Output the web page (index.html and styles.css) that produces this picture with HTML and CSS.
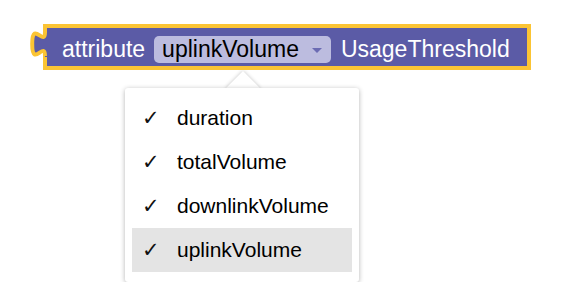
FILE: index.html
```html
<!DOCTYPE html>
<html lang="en">
<head>
    <meta charset="UTF-8">
    <title>Attribute block</title>
    <link rel="stylesheet" href="styles.css">
</head>
<body>

<div class="canvas">
    <div class="block">
        <svg class="tab" width="26" height="46" viewBox="0 0 26 46">
            <path d="M26,9 L20,9 c0,16 -12.8,-12.8 -12.8,12 s12.8,-4 12.8,12 L26,33 Z" fill="#5b5ba6"/>
            <path d="M20,8 c0,16 -12.8,-12.8 -12.8,12 s12.8,-4 12.8,12" fill="none" stroke="#fbc434" stroke-width="4"/>
        </svg>
        <span class="label">attribute</span>
        <span class="field">
            uplinkVolume
            <span class="arrow"></span>
        </span>
        <span class="label">UsageThreshold</span>
    </div>

    <div class="menu">
        <div class="item"><span class="check">✓</span>duration</div>
        <div class="item"><span class="check">✓</span>totalVolume</div>
        <div class="item"><span class="check">✓</span>downlinkVolume</div>
        <div class="item active"><span class="check">✓</span>uplinkVolume</div>
    </div>
</div>

</body>
</html>
```

FILE: styles.css
```css
body {
    margin: 0;
    background-color: #fff;
    font-family: 'Liberation Sans', Arial, sans-serif;
}
.canvas {
    padding: 24px 0 0 43px;
}
.block {
    position: relative;
    display: inline-flex;
    align-items: center;
    height: 46px;
    box-sizing: border-box;
    padding: 8px 17px 3px 15px;
    background-color: #5b5ba6;
    border: 4px solid #fbc434;
    color: #fff;
    font-size: 23px;
}
.tab {
    position: absolute;
    left: -22px;
    top: -4px;
}
.label {
    line-height: 27px;
}
.field {
    display: flex;
    align-items: center;
    height: 27px;
    margin: 0 10px 0 9px;
    padding: 0 9px 0 8px;
    background-color: #bcbcdf;
    border-radius: 5px;
    color: #000;
    line-height: 27px;
}
.arrow {
    width: 0;
    height: 0;
    margin-left: 13px;
    margin-top: 1px;
    border-left: 5px solid transparent;
    border-right: 5px solid transparent;
    border-top: 5px solid #6b6bb3;
}
.menu {
    position: relative;
    width: 234px;
    margin: 18px 0 0 82px;
    padding: 8px 7px 10px 7px;
    box-sizing: border-box;
    background-color: #fff;
    border-radius: 3px;
    box-shadow: 0 1px 5px rgba(0, 0, 0, 0.3);
}
.menu::before {
    content: "";
    position: absolute;
    left: 106px;
    top: -12px;
    width: 24px;
    height: 24px;
    background-color: #fff;
    transform: rotate(45deg);
    box-shadow: 0 0 4px rgba(0, 0, 0, 0.25);
    z-index: -1;
}
.item {
    display: flex;
    align-items: center;
    height: 44px;
    padding-left: 10px;
    font-size: 21px;
    color: #000;
}
.item.active {
    background-color: #e4e4e4;
}
.check {
    width: 35px;
    font-family: 'DejaVu Sans', sans-serif;
    font-size: 21px;
    color: #111;
}
```
